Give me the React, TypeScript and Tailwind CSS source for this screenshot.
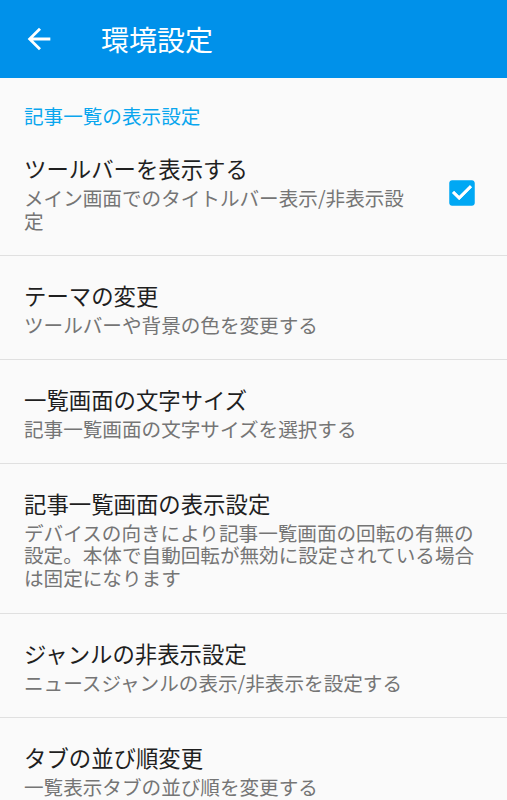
import React from 'react';

interface PrefItem {
  title: string;
  summary: string;
  checked?: boolean;
}

const items: PrefItem[] = [
  { title: 'ツールバーを表示する', summary: 'メイン画面でのタイトルバー表示/非表示設定', checked: true },
  { title: 'テーマの変更', summary: 'ツールバーや背景の色を変更する' },
  { title: '一覧画面の文字サイズ', summary: '記事一覧画面の文字サイズを選択する' },
  {
    title: '記事一覧画面の表示設定',
    summary: 'デバイスの向きにより記事一覧画面の回転の有無の設定。本体で自動回転が無効に設定されている場合は固定になります',
  },
  { title: 'ジャンルの非表示設定', summary: 'ニュースジャンルの表示/非表示を設定する' },
  { title: 'タブの並び順変更', summary: '一覧表示タブの並び順を変更する' },
];

const CheckBox = () => (
  <svg viewBox="0 0 24 24" className="w-[34px] h-[34px]">
    <path
      fill="#00A8F4"
      d="M19 3H5c-1.11 0-2 .9-2 2v14c0 1.1.89 2 2 2h14c1.11 0 2-.9 2-2V5c0-1.1-.89-2-2-2zm-9 14l-5-5 1.41-1.41L10 14.17l7.59-7.59L19 8l-9 9z"
    />
    <path fill="#fff" d="M10 17l-5-5 1.41-1.41L10 14.17l7.59-7.59L19 8z" />
  </svg>
);

const App = () => {
  return (
    <div className="w-[507px] h-[800px] overflow-hidden bg-[#FAFAFA] font-['Noto_Sans_CJK_JP',sans-serif]">
      {/* Toolbar */}
      <div className="h-[78px] bg-[#0091EA] flex items-center">
        <svg viewBox="0 0 24 24" className="w-[34px] h-[34px] ml-[22px]">
          <path fill="#fff" d="M20 11H7.83l5.59-5.59L12 4l-8 8 8 8 1.41-1.41L7.83 13H20v-2z" />
        </svg>
        <h1 className="ml-[45px] text-[28px] leading-[34px] text-white">環境設定</h1>
      </div>

      {/* Category */}
      <div className="pt-[27px] pb-[2px] px-[24px] text-[19.6px] leading-[22px] text-[#0AA6EE]">
        記事一覧の表示設定
      </div>

      {/* Preferences */}
      <div>
        {items.map((item, i) => (
          <div
            key={item.title}
            className={`flex items-center border-b border-[#E0E0E0] pl-[24px] pr-[24px] pt-[24px] ${i === 3 ? 'pb-[23.5px]' : 'pb-[22.5px]'}`}
          >
            <div className={item.checked ? 'w-[390px] shrink-0' : 'flex-1'}>
              <div className="text-[22.4px] leading-[30px] text-[#1F1F1F]">{item.title}</div>
              <div className="mt-[4px] text-[19.6px] leading-[22.5px] text-[#757575]">{item.summary}</div>
            </div>
            {item.checked && (
              <div className="flex-1 flex justify-end pr-[4px]">
                <CheckBox />
              </div>
            )}
          </div>
        ))}
      </div>
    </div>
  );
};

export default App;
